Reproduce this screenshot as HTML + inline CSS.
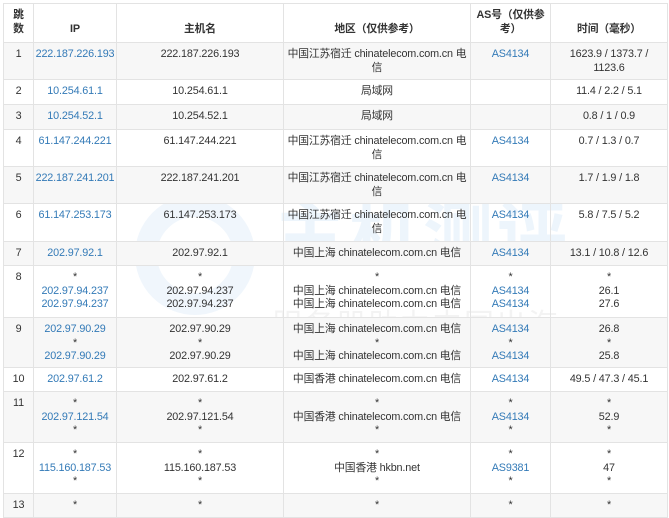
<!DOCTYPE html>
<html><head><meta charset="utf-8"><style>
html,body{margin:0;padding:0;background:#fff;width:669px;height:518px;overflow:hidden;position:relative}
body{font-family:"Liberation Sans","Noto Sans CJK SC",sans-serif;font-size:10.8px;color:#333;letter-spacing:-0.15px}
table{position:absolute;left:3px;top:3px;border-collapse:collapse;table-layout:fixed;width:664px}
td,th{border:1px solid #e3e3e3;text-align:center;vertical-align:top;padding:5px 1px 0;line-height:13.5px;overflow:hidden;white-space:nowrap}
th{vertical-align:bottom;padding-bottom:6px;font-weight:bold}
tbody tr:nth-child(odd){background:#f7f7f7}
a{color:#337ab7;text-decoration:none}
.wm{position:absolute;pointer-events:none}
</style></head><body>
<div class="wm" style="left:135px;top:195px;width:120px;height:120px;border-radius:50%;border:22px solid rgba(60,140,220,0.08);box-sizing:border-box"></div>
<div class="wm" style="left:275px;top:195px;font-size:70px;font-weight:bold;color:rgba(60,140,220,0.09);letter-spacing:4px;line-height:80px">主机测评</div>
<div class="wm" style="left:272px;top:300px;font-size:30px;color:rgba(120,120,120,0.09);letter-spacing:2px">服务器助力中国出海</div>
<table>
<colgroup><col style="width:30px"><col style="width:83px"><col style="width:167px"><col style="width:187px"><col style="width:80px"><col style="width:117px"></colgroup>
<thead><tr style="height:39px"><th>跳<br>数</th><th>IP</th><th>主机名</th><th>地区（仅供参考）</th><th>AS号（仅供参<br>考）</th><th>时间（毫秒）</th></tr></thead>
<tbody>
<tr style="height:37px"><td>1</td><td><a>222.187.226.193</a></td><td>222.187.226.193</td><td>中国江苏宿迁 chinatelecom.com.cn 电<br>信</td><td><a>AS4134</a></td><td>1623.9 / 1373.7 /<br>1123.6</td></tr>
<tr style="height:25px"><td>2</td><td><a>10.254.61.1</a></td><td>10.254.61.1</td><td>局域网</td><td></td><td>11.4 / 2.2 / 5.1</td></tr>
<tr style="height:25px"><td>3</td><td><a>10.254.52.1</a></td><td>10.254.52.1</td><td>局域网</td><td></td><td>0.8 / 1 / 0.9</td></tr>
<tr style="height:37px"><td>4</td><td><a>61.147.244.221</a></td><td>61.147.244.221</td><td>中国江苏宿迁 chinatelecom.com.cn 电<br>信</td><td><a>AS4134</a></td><td>0.7 / 1.3 / 0.7</td></tr>
<tr style="height:37px"><td>5</td><td><a>222.187.241.201</a></td><td>222.187.241.201</td><td>中国江苏宿迁 chinatelecom.com.cn 电<br>信</td><td><a>AS4134</a></td><td>1.7 / 1.9 / 1.8</td></tr>
<tr style="height:38px"><td>6</td><td><a>61.147.253.173</a></td><td>61.147.253.173</td><td>中国江苏宿迁 chinatelecom.com.cn 电<br>信</td><td><a>AS4134</a></td><td>5.8 / 7.5 / 5.2</td></tr>
<tr style="height:24px"><td>7</td><td><a>202.97.92.1</a></td><td>202.97.92.1</td><td>中国上海 chinatelecom.com.cn 电信</td><td><a>AS4134</a></td><td>13.1 / 10.8 / 12.6</td></tr>
<tr style="height:52px"><td>8</td><td>*<br><a>202.97.94.237</a><br><a>202.97.94.237</a></td><td>*<br>202.97.94.237<br>202.97.94.237</td><td>*<br>中国上海 chinatelecom.com.cn 电信<br>中国上海 chinatelecom.com.cn 电信</td><td>*<br><a>AS4134</a><br><a>AS4134</a></td><td>*<br>26.1<br>27.6</td></tr>
<tr style="height:50px"><td>9</td><td><a>202.97.90.29</a><br>*<br><a>202.97.90.29</a></td><td>202.97.90.29<br>*<br>202.97.90.29</td><td>中国上海 chinatelecom.com.cn 电信<br>*<br>中国上海 chinatelecom.com.cn 电信</td><td><a>AS4134</a><br>*<br><a>AS4134</a></td><td>26.8<br>*<br>25.8</td></tr>
<tr style="height:24px"><td>10</td><td><a>202.97.61.2</a></td><td>202.97.61.2</td><td>中国香港 chinatelecom.com.cn 电信</td><td><a>AS4134</a></td><td>49.5 / 47.3 / 45.1</td></tr>
<tr style="height:51px"><td>11</td><td>*<br><a>202.97.121.54</a><br>*</td><td>*<br>202.97.121.54<br>*</td><td>*<br>中国香港 chinatelecom.com.cn 电信<br>*</td><td>*<br><a>AS4134</a><br>*</td><td>*<br>52.9<br>*</td></tr>
<tr style="height:51px"><td>12</td><td>*<br><a>115.160.187.53</a><br>*</td><td>*<br>115.160.187.53<br>*</td><td>*<br>中国香港 hkbn.net<br>*</td><td>*<br><a>AS9381</a><br>*</td><td>*<br>47<br>*</td></tr>
<tr style="height:24px"><td>13</td><td>*</td><td>*</td><td>*</td><td>*</td><td>*</td></tr>
</tbody></table>
</body></html>
